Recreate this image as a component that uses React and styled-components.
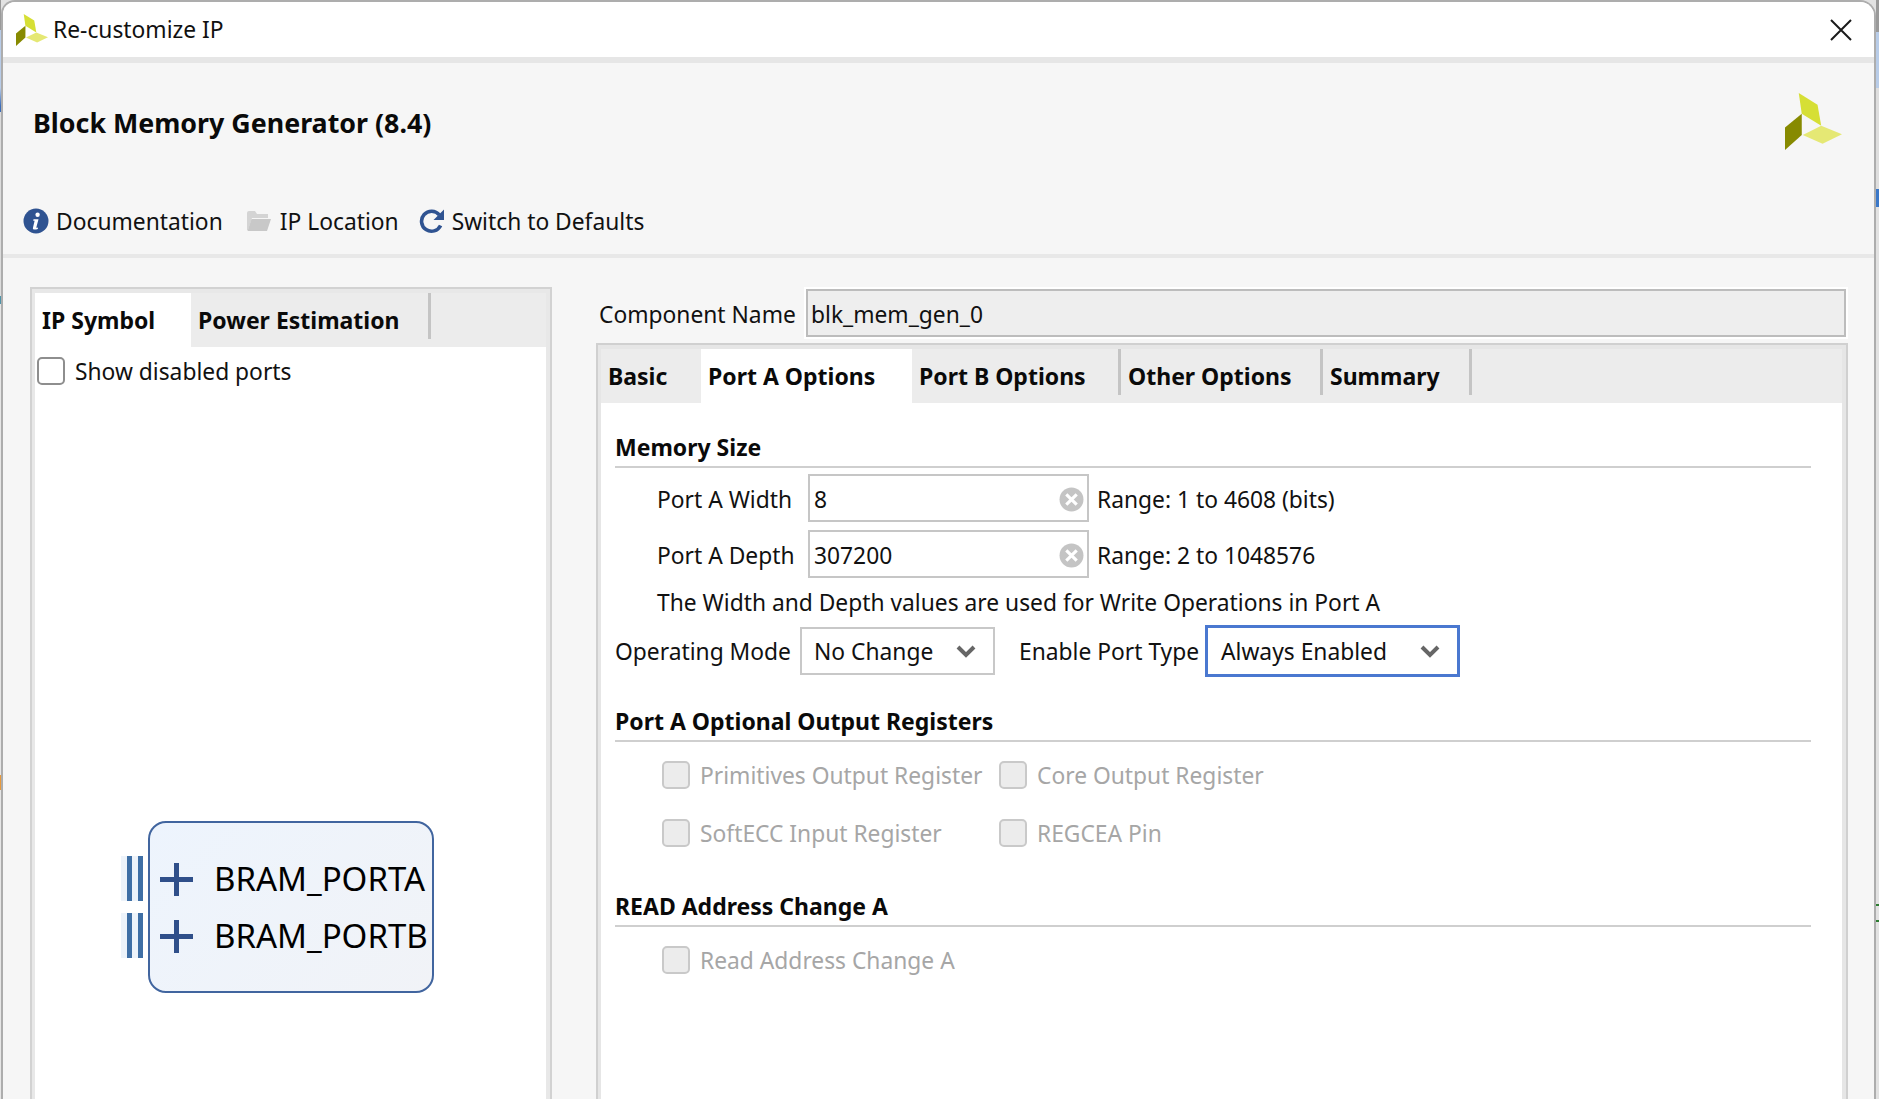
// App.jsx

import React from 'react';
import styled, { createGlobalStyle } from "styled-components";

const FONT = `"Noto Sans", "Open Sans", "Liberation Sans", sans-serif`;

const GlobalStyle = createGlobalStyle`
    html, body {
        margin: 0;
        padding: 0;
        height: 1099px;
        overflow: hidden;
    }
    body {
        font-family: ${FONT};
        color: #111;
        background-color: #e2e2e2;
        background-image:
            linear-gradient(to bottom, #9a9a9a 0 32px, #b8cce8 32px 88px, #dedede 88px 189px, #3b78c8 189px 207px, #e2e2e2 207px 904px, #2e7d32 904px 906px, #e2e2e2 906px 920px, #2e7d32 920px 922px, #e2e2e2 922px),
            linear-gradient(to bottom, #9a9a9a 0 30px, #b8cce8 30px 88px, #3b6cb8 106px 112px, #dcdcdc 112px 296px, #4f93a8 296px 304px, #e6e6e6 304px 775px, #e89a3c 775px 790px, #e6e6e6 790px);
        background-size: 3px 100%, 1px 100%;
        background-position: right top, left top;
        background-repeat: no-repeat;
    }
`;

const Win = styled.div`
    box-sizing: border-box;
    margin: 0 3px 0 1px;
    height: 1099px;
    border: 2px solid #adadad;
    border-bottom: none;
    border-radius: 14px 16px 0 0;
    background: #f6f6f6;
    display: flex;
    flex-direction: column;
    overflow: hidden;
`;

const TitleBar = styled.div`
    flex: none;
    height: 55px;
    background: #fff;
    border-bottom: 6px solid #e6e6e6;
    display: flex;
    align-items: center;
    padding: 0 22px 0 13px;
`;

const TitleText = styled.span`
    font-size: 22.8px;
    margin-left: 5px;
    flex: 1;
`;

const Header = styled.div`
    flex: none;
    height: 191px;
    border-bottom: 4px solid #e8e8e8;
    display: flex;
    flex-direction: column;
    position: relative;
`;

const HeaderLogo = styled.div`
    position: absolute;
    right: 32px;
    top: 30px;
    line-height: 0;
`;

const Heading = styled.h1`
    margin: 44px 0 0 30px;
    font-size: 26.8px;
    line-height: 32px;
    font-weight: 700;
    color: #0a0a0a;
`;

const Toolbar = styled.div`
    display: flex;
    align-items: center;
    margin: 64px 0 0 20px;
    height: 36px;
`;

const ToolItem = styled.div`
    display: flex;
    align-items: center;
    gap: ${p => p.$gap}px;
    font-size: 22.8px;
    margin-right: ${p => p.$mr}px;
`;

const Main = styled.div`
    flex: 1;
    display: flex;
    min-height: 0;
    padding: 29px 26px 0 27px;
    gap: 44px;
`;

const SidePanel = styled.div`
    box-sizing: border-box;
    flex: none;
    width: 522px;
    border: 2px solid #d2d2d2;
    border-bottom: none;
    background: #e8e8e8;
    padding: 4px 4px 0 3px;
    display: flex;
    flex-direction: column;
`;

const RightCol = styled.div`
    flex: 1;
    min-width: 0;
    display: flex;
    flex-direction: column;
`;

const TabStrip = styled.div`
    flex: none;
    height: 54px;
    background: #ececec;
    display: flex;
    align-items: flex-start;
`;

const Tab = styled.div`
    box-sizing: border-box;
    height: ${p => (p.$active ? '54px' : '46px')};
    width: ${p => p.$w}px;
    padding: 7px 0 ${p => (p.$active ? '8px' : '0')} 7px;
    display: flex;
    align-items: center;
    font-size: 23px;
    font-weight: 700;
    color: #0a0a0a;
    white-space: nowrap;
    background: ${p => (p.$active ? '#fff' : 'transparent')};
    border-right: ${p => (p.$sep ? '3px solid #c4c4c4' : 'none')};
`;

const SideBody = styled.div`
    flex: 1;
    background: #fff;
    padding: 10px 0 0 2px;
`;

const CheckRow = styled.label`
    display: flex;
    align-items: center;
    height: 28px;
    font-size: 22.8px;
    white-space: nowrap;
    color: ${p => (p.$disabled ? '#a6a6a6' : '#111')};
`;

const Box = styled.span`
    box-sizing: border-box;
    flex: none;
    width: 28px;
    height: 28px;
    border-radius: 5px;
    border: 2px solid ${p => (p.$disabled ? '#c9c9c9' : '#8e8e8e')};
    background: ${p => (p.$disabled ? '#ececec' : '#fff')};
    margin-right: 10px;
`;

const Symbol = styled.div`
    display: flex;
    margin: 436px 0 0 84px;
    gap: 5px;
`;

const Ports = styled.div`
    padding-top: 35px;
    display: flex;
    flex-direction: column;
    gap: 12px;
`;

const PortBars = styled.div`
    width: 22px;
    height: 45px;
    background:
        linear-gradient(to right, #edf3fa 0 6px, #3f6fa5 6px 11px, #edf3fa 11px 17px, #3f6fa5 17px 22px);
`;

const Block = styled.div`
    box-sizing: border-box;
    width: 286px;
    height: 172px;
    border: 2px solid #41659f;
    border-radius: 18px;
    background: linear-gradient(135deg, #edf4fd, #f1f3f7);
    padding: 28px 0 0 10px;
`;

const BlockRow = styled.div`
    display: flex;
    align-items: center;
    height: 57px;
    gap: 21px;
    font-size: 33px;
    color: #000;
    line-height: 0;
`;

const BlockLabel = styled.span`
    margin-top: -2px;
`;

const NameRow = styled.div`
    flex: none;
    display: flex;
    align-items: center;
    height: 60px;
    margin-top: -4px;
    padding-left: 3px;
    font-size: 22.8px;
`;

const NameLabel = styled.span`
    flex: none;
    width: 207px;
    padding-top: 2px;
`;

const NameInput = styled.div`
    box-sizing: border-box;
    flex: 1;
    height: 48px;
    margin-right: 2px;
    background: #eee;
    border: 2px solid #bcbcbc;
    outline: 2px solid #fff;
    outline-offset: 0;
    display: flex;
    align-items: center;
    padding: 2px 0 0 3px;
`;

const TabPanel = styled.div`
    box-sizing: border-box;
    flex: 1;
    border: 2px solid #d0d0d0;
    border-bottom: none;
    background: #e6e6e6;
    padding: 4px 4px 0 3px;
    display: flex;
    flex-direction: column;
`;

const TabBody = styled.div`
    flex: 1;
    background: #fff;
    padding: 0 31px 0 14px;
`;

const SectionTitle = styled.div`
    box-sizing: border-box;
    height: 35px;
    margin-top: ${p => p.$mt}px;
    border-bottom: 2px solid #cfcfcf;
    font-size: 23px;
    font-weight: 700;
    line-height: 29px;
    color: #0a0a0a;
    white-space: nowrap;
`;

const FieldRow = styled.div`
    box-sizing: border-box;
    display: flex;
    align-items: center;
    height: 48px;
    padding-top: 3px;
    margin: ${p => p.$mt}px 0 0 42px;
    font-size: 22.8px;
`;

const FieldLabel = styled.span`
    width: 151px;
    flex: none;
`;

const TextField = styled.div`
    box-sizing: border-box;
    width: 281px;
    height: 48px;
    margin: -3px 8px 0 0;
    border: 2px solid #c6c6c6;
    background: #fff;
    display: flex;
    align-items: center;
    justify-content: space-between;
    padding: 2px 3px 0 4px;
`;

const Note = styled.div`
    margin: 10px 0 0 42px;
    height: 30px;
    line-height: 30px;
    font-size: 22.8px;
`;

const ComboRow = styled.div`
    display: flex;
    align-items: center;
    height: 52px;
    margin-top: 7px;
    font-size: 22.8px;
`;

const ComboLabel = styled.span`
    flex: none;
    width: ${p => p.$w}px;
    margin-left: ${p => p.$ml || 0}px;
    white-space: nowrap;
`;

const Combo = styled.div`
    box-sizing: border-box;
    width: ${p => p.$w}px;
    height: ${p => (p.$focus ? 52 : 48)}px;
    border: ${p => (p.$focus ? '3px solid #4a78d0' : '2px solid #c8c8c8')};
    display: flex;
    align-items: center;
    justify-content: space-between;
    padding: 0 17px 0 ${p => (p.$focus ? 13 : 12)}px;
    background: #fff;
`;

const CheckGrid = styled.div`
    display: grid;
    grid-template-columns: 337px auto;
    row-gap: 30px;
    margin: 19px 0 0 47px;
    justify-content: start;
`;

const LogoSvg = styled.svg`
    filter: ${p => (p.$blur ? 'blur(0.6px)' : 'none')};
`;

const InfoIcon = () => (
    <svg width="26" height="26" viewBox="0 0 26 26">
        <circle cx="13" cy="13" r="12.5" fill="#2f5391" />
        <circle cx="14.6" cy="6.8" r="2.2" fill="#fff" />
        <path d="M10.5 11.2h5l-2.2 8.2c-.1.5.3.7 1.8.1l-.3 1.4c-3 1.1-5.2.9-4.9-1l1.7-7.2h-1.4z" fill="#fff" />
    </svg>
);

const FolderIcon = () => (
    <svg width="25" height="24" viewBox="0 0 25 24">
        <path d="M1 4a2 2 0 0 1 2-2h6l2 3h11v4H6L2 21H1z" fill="#d4d4d4" />
        <path d="M5.5 10H25l-4 12H1.5z" fill="#c8c8c8" />
    </svg>
);

const RefreshIcon = () => (
    <svg width="27" height="26" viewBox="0 0 27 26">
        <path d="M21.6 17.5a10 10 0 1 1-1.3-10.6" fill="none" stroke="#2f5391" strokeWidth="3.6" />
        <path d="M25 1.5V12H14.5z" fill="#2f5391" />
    </svg>
);

const ClearIcon = () => (
    <svg width="25" height="25" viewBox="0 0 24 24">
        <circle cx="12" cy="12" r="11.5" fill="#c4c4c4" />
        <path d="M7 7l10 10M17 7L7 17" stroke="#fff" strokeWidth="3" />
    </svg>
);

const Chevron = () => (
    <svg width="20" height="13" viewBox="0 0 20 13">
        <path d="M2 2l8 8 8-8" fill="none" stroke="#666" strokeWidth="4" />
    </svg>
);

const PlusIcon = () => (
    <svg width="33" height="33" viewBox="0 0 33 33">
        <path d="M0 16.5h33M16.5 0v33" stroke="#2f4f8a" strokeWidth="5" />
    </svg>
);

const CloseIcon = () => (
    <svg width="22" height="22" viewBox="0 0 22 22">
        <path d="M1 1l20 20M21 1L1 21" stroke="#1a1a1a" strokeWidth="2" />
    </svg>
);

const XilinxLogo = ({ size, blur }) => (
    <LogoSvg $blur={blur} width={size} height={size} viewBox="255 280 170 170">
        <path d="M296 280l56 35 11 63-58-36z" fill="#d6df35" />
        <path d="M305 342l-50 41v67l50-45z" fill="#878a00" />
        <path d="M308 405l55-27 62 25-58 28z" fill="#e5e874" />
    </LogoSvg>
);

const App = () => {
    return (
        <>
            <GlobalStyle />
            <Win>
                <TitleBar>
                    <XilinxLogo size={32} blur />
                    <TitleText>Re-customize IP</TitleText>
                    <CloseIcon />
                </TitleBar>
                <Header>
                    <Heading>Block Memory Generator (8.4)</Heading>
                    <HeaderLogo><XilinxLogo size={57} /></HeaderLogo>
                    <Toolbar>
                        <ToolItem $gap={7} $mr={23}><InfoIcon />Documentation</ToolItem>
                        <ToolItem $gap={9} $mr={20}><FolderIcon />IP Location</ToolItem>
                        <ToolItem $gap={6} $mr={0}><RefreshIcon />Switch to Defaults</ToolItem>
                    </Toolbar>
                </Header>
                <Main>
                    <SidePanel>
                        <TabStrip>
                            <Tab $active $w={156}>IP Symbol</Tab>
                            <Tab $w={240} $sep>Power Estimation</Tab>
                        </TabStrip>
                        <SideBody>
                            <CheckRow><Box />Show disabled ports</CheckRow>
                            <Symbol>
                                <Ports>
                                    <PortBars />
                                    <PortBars />
                                </Ports>
                                <Block>
                                    <BlockRow><PlusIcon /><BlockLabel>BRAM_PORTA</BlockLabel></BlockRow>
                                    <BlockRow><PlusIcon /><BlockLabel>BRAM_PORTB</BlockLabel></BlockRow>
                                </Block>
                            </Symbol>
                        </SideBody>
                    </SidePanel>
                    <RightCol>
                        <NameRow>
                            <NameLabel>Component Name</NameLabel>
                            <NameInput>blk_mem_gen_0</NameInput>
                        </NameRow>
                        <TabPanel>
                            <TabStrip>
                                <Tab $w={100}>Basic</Tab>
                                <Tab $active $w={211}>Port A Options</Tab>
                                <Tab $w={209} $sep>Port B Options</Tab>
                                <Tab $w={202} $sep>Other Options</Tab>
                                <Tab $w={149} $sep>Summary</Tab>
                            </TabStrip>
                            <TabBody>
                                <SectionTitle $mt={30}>Memory Size</SectionTitle>
                                <FieldRow $mt={6}>
                                    <FieldLabel>Port A Width</FieldLabel>
                                    <TextField>8<ClearIcon /></TextField>
                                    Range: 1 to 4608 (bits)
                                </FieldRow>
                                <FieldRow $mt={8}>
                                    <FieldLabel>Port A Depth</FieldLabel>
                                    <TextField>307200<ClearIcon /></TextField>
                                    Range: 2 to 1048576
                                </FieldRow>
                                <Note>The Width and Depth values are used for Write Operations in Port A</Note>
                                <ComboRow>
                                    <ComboLabel $w={185}>Operating Mode</ComboLabel>
                                    <Combo $w={195}>No Change<Chevron /></Combo>
                                    <ComboLabel $w={186} $ml={24}>Enable Port Type</ComboLabel>
                                    <Combo $focus $w={255}>Always Enabled<Chevron /></Combo>
                                </ComboRow>
                                <SectionTitle $mt={30}>Port A Optional Output Registers</SectionTitle>
                                <CheckGrid>
                                    <CheckRow $disabled><Box $disabled />Primitives Output Register</CheckRow>
                                    <CheckRow $disabled><Box $disabled />Core Output Register</CheckRow>
                                    <CheckRow $disabled><Box $disabled />SoftECC Input Register</CheckRow>
                                    <CheckRow $disabled><Box $disabled />REGCEA Pin</CheckRow>
                                </CheckGrid>
                                <SectionTitle $mt={45}>READ Address Change A</SectionTitle>
                                <CheckGrid>
                                    <CheckRow $disabled><Box $disabled />Read Address Change A</CheckRow>
                                </CheckGrid>
                            </TabBody>
                        </TabPanel>
                    </RightCol>
                </Main>
            </Win>
        </>
    );
};

export default App;
